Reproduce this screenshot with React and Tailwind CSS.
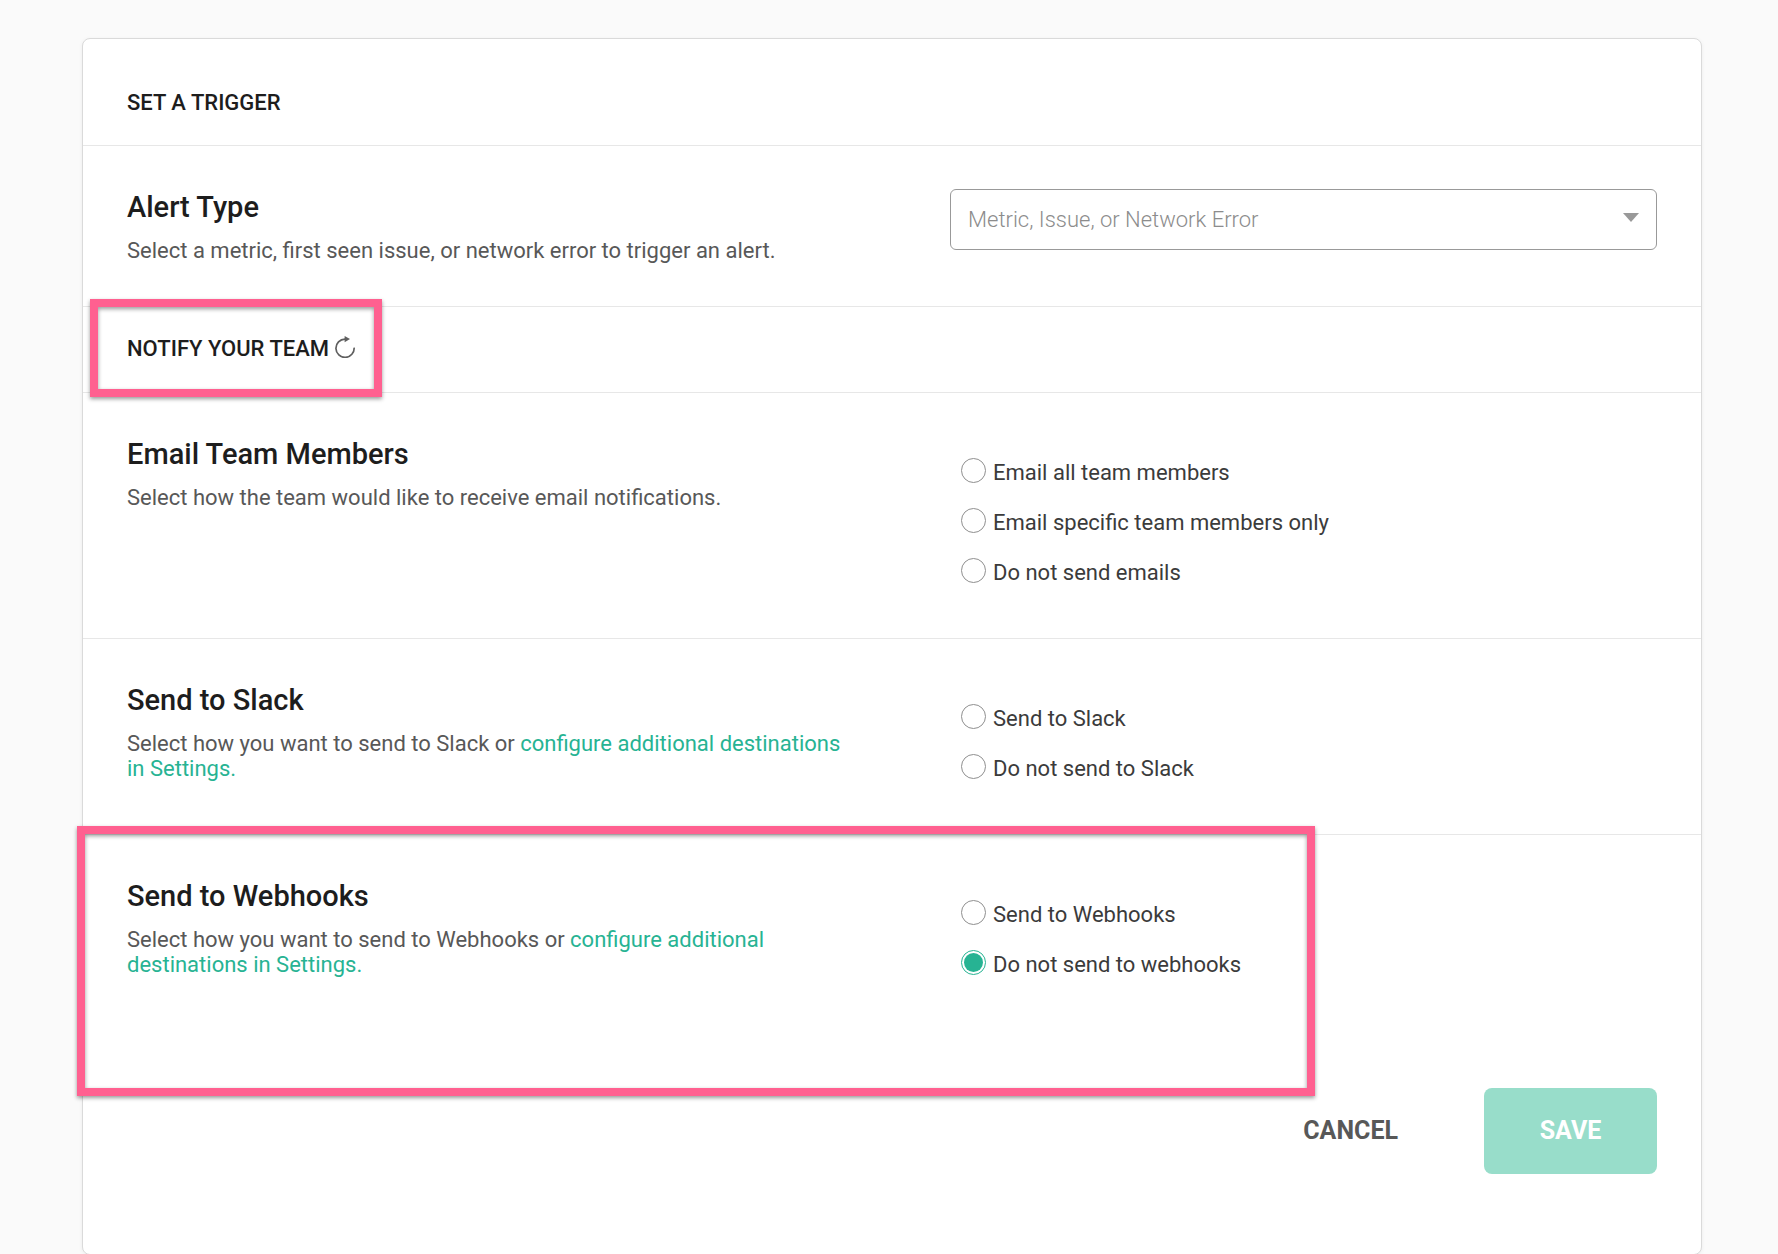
import { useState } from 'react';

const OPTION_GROUPS = {
  email: [
    { id: 'all', label: 'Email all team members' },
    { id: 'specific', label: 'Email specific team members only' },
    { id: 'none', label: 'Do not send emails' },
  ],
  slack: [
    { id: 'send', label: 'Send to Slack' },
    { id: 'none', label: 'Do not send to Slack' },
  ],
  webhooks: [
    { id: 'send', label: 'Send to Webhooks' },
    { id: 'none', label: 'Do not send to webhooks' },
  ],
};

const ReloadIcon = () => (
  <svg width="20" height="22" viewBox="0 0 20 22" fill="none" aria-hidden="true">
    <path d="M10.5 3.2H10A9.1 9.1 0 1 0 19.1 11.6" stroke="#5f5f5f" strokeWidth="1.7" />
    <path d="M9.6 0L15 3.1L9.6 6.2Z" fill="#5f5f5f" />
  </svg>
);

// Pink frame drawn over the form to call out a section
const Highlight = ({ className }) => (
  <div
    className={`absolute pointer-events-none border-8 border-[#ff6090] shadow-[0_2px_4px_rgba(0,0,0,0.4),inset_0_2px_4px_rgba(0,0,0,0.4)] ${className}`}
  />
);

const Section = ({ title, description, children }) => (
  <div className="grid grid-cols-[723fr_707fr] gap-[100px] px-11">
    <div className="pt-[45px] pb-[43px]">
      <h3 className="text-[29px] leading-8 font-medium text-[#1d1d1d]">{title}</h3>
      <p className="mt-[15px] text-[22px] leading-[25px] text-[#585858]">{description}</p>
    </div>
    {children}
  </div>
);

const RadioGroup = ({ name, legend, value, onChange }) => (
  <fieldset aria-label={legend} className="flex flex-col gap-5 pt-[65px] pb-[50px] pl-[11px]">
    {OPTION_GROUPS[name].map(o => (
      <label key={o.id} className="flex items-start gap-[7px] text-[22px] leading-[30px] text-[#3b3b3b]">
        <input
          type="radio"
          name={name}
          value={o.id}
          checked={value === o.id}
          onChange={() => onChange(name, o.id)}
          className="size-[25px] shrink-0 appearance-none rounded-full border border-[#8f8f8f] bg-white bg-clip-content p-[2px] checked:border-[#27b393] checked:bg-[#27b393]"
        />
        {o.label}
      </label>
    ))}
  </fieldset>
);

const App = () => {
  const [alertType, setAlertType] = useState('');
  const [choices, setChoices] = useState({ email: null, slack: null, webhooks: 'none' });

  const handleChange = (name, id) => setChoices({ ...choices, [name]: id });

  return (
    <div className="min-h-screen bg-[#fafafa] pt-[38px] pr-[76px] pl-[82px] font-[Roboto,sans-serif]">
      <form
        onSubmit={e => e.preventDefault()}
        className="rounded-lg border border-[#dadada] bg-white shadow-[0_1px_4px_rgba(0,0,0,0.06)]"
      >
        <div className="border-b border-[#e7e7e7] px-11 pt-[51px] pb-[29px]">
          <h2 className="text-[22px] leading-[26px] font-medium text-[#1d1d1d]">SET A TRIGGER</h2>
        </div>

        <div className="border-b border-[#e7e7e7]">
          <Section
            title={<label htmlFor="alert-type">Alert Type</label>}
            description="Select a metric, first seen issue, or network error to trigger an alert."
          >
            <div className="relative mt-[43px] self-start">
              <select
                id="alert-type"
                value={alertType}
                onChange={e => setAlertType(e.target.value)}
                className="block h-[61px] w-full appearance-none rounded-md border border-[#999] bg-white px-[17px] text-[22px] font-light text-[#8c8c8c]"
              >
                <option value="" disabled>Metric, Issue, or Network Error</option>
                <option value="metric">Metric</option>
                <option value="issue">Issue</option>
                <option value="network">Network Error</option>
              </select>
              <svg className="absolute top-6 right-[18px] pointer-events-none" width="16" height="9" viewBox="0 0 16 9" aria-hidden="true">
                <path d="M0 0H16L8 9Z" fill="#999" />
              </svg>
            </div>
          </Section>
        </div>

        <div className="relative border-b border-[#e7e7e7] px-11 pt-[29px] pb-[30px]">
          <div className="flex items-start gap-1.5">
            <h2 className="text-[22px] leading-[26px] font-medium text-[#1d1d1d]">NOTIFY YOUR TEAM</h2>
            <button type="button" aria-label="Refresh"><ReloadIcon /></button>
          </div>
          <Highlight className="-top-2 left-[7px] h-[98px] w-[292px]" />
        </div>

        <div className="border-b border-[#e7e7e7]">
          <Section
            title="Email Team Members"
            description="Select how the team would like to receive email notifications."
          >
            <RadioGroup name="email" legend="Email Team Members" value={choices.email} onChange={handleChange} />
          </Section>
        </div>

        <div className="border-b border-[#e7e7e7]">
          <Section
            title="Send to Slack"
            description={<>Select how you want to send to Slack or <a href="#settings" className="text-[#27b393]">configure additional destinations in Settings.</a></>}
          >
            <RadioGroup name="slack" legend="Send to Slack" value={choices.slack} onChange={handleChange} />
          </Section>
        </div>

        <div className="relative pb-[58px]">
          <Section
            title="Send to Webhooks"
            description={<>Select how you want to send to Webhooks or <a href="#settings" className="text-[#27b393]">configure additional destinations in Settings.</a></>}
          >
            <RadioGroup name="webhooks" legend="Send to Webhooks" value={choices.webhooks} onChange={handleChange} />
          </Section>
          <Highlight className="-top-[9px] -left-[6px] h-[270px] w-[1238px]" />
        </div>

        <div className="flex items-center justify-end gap-[86px] px-11 pb-20">
          <button type="button" className="text-[25px] font-bold text-[#585858]">CANCEL</button>
          <button type="submit" className="h-[86px] w-[173px] rounded-lg bg-[#98ddca] text-[25px] font-bold text-white">SAVE</button>
        </div>
      </form>
    </div>
  );
};

export default App;
